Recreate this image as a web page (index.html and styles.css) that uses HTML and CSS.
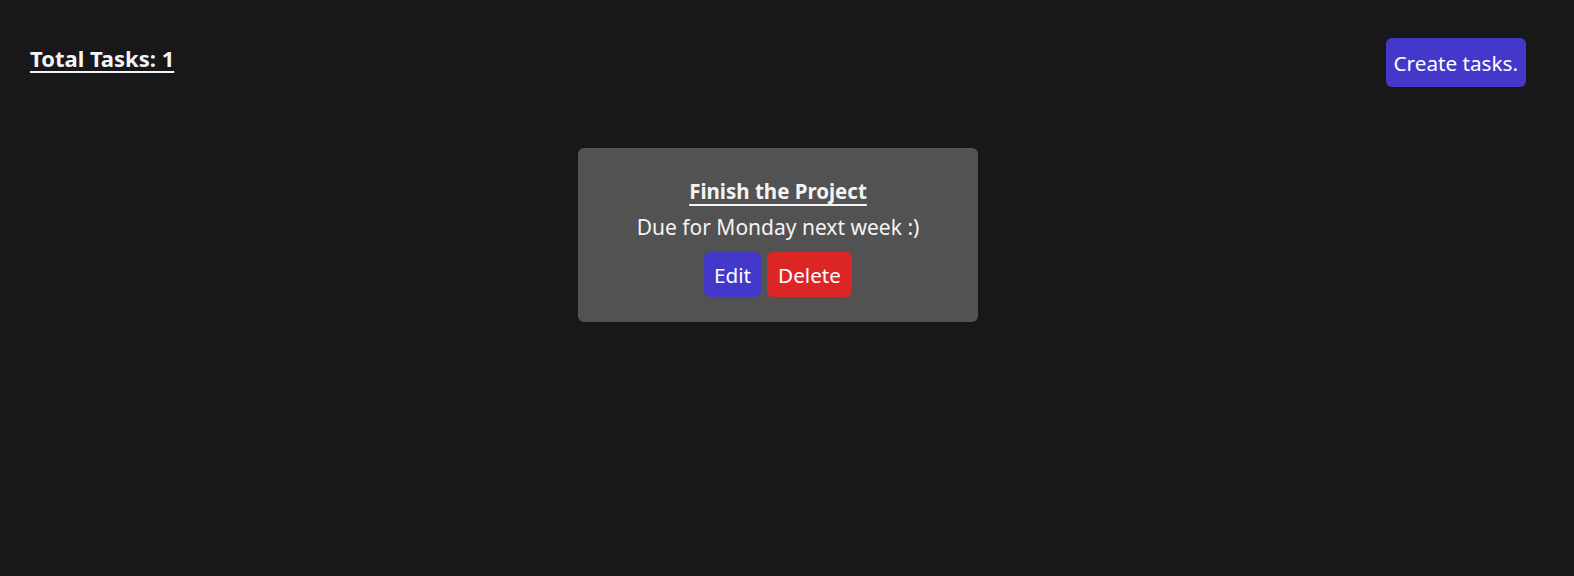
FILE: index.html
```html
<!DOCTYPE html>
<html>
<head>
<meta charset="utf-8">
<link rel="stylesheet" href="styles.css">
</head>
<body>
<div class="page">
  <header class="topbar">
    <h1 class="total">Total Tasks: 1</h1>
    <button class="btn btn-create">Create tasks.</button>
  </header>
  <main class="list">
    <div class="card">
      <h2 class="card-title">Finish the Project</h2>
      <p class="card-desc">Due for Monday next week :)</p>
      <div class="actions">
        <button class="btn btn-edit">Edit</button>
        <button class="btn btn-delete">Delete</button>
      </div>
    </div>
  </main>
</div>
</body>
</html>
```
FILE: styles.css
```css
html, body {
  margin: 0;
  padding: 0;
  background: #18181b;
  color: #f4f4f5;
  font-family: "Noto Sans", "Open Sans", sans-serif;
}
.page {
  min-height: 576px;
}
.topbar {
  display: flex;
  justify-content: space-between;
  align-items: flex-start;
  padding: 38px 48px 0 30px;
}
.total {
  margin: 6px 0 0 0;
  font-size: 22px;
  font-weight: 700;
  line-height: 28px;
  text-decoration: underline;
  text-underline-offset: 4px;
}
.btn {
  border: none;
  color: #fff;
  font-family: inherit;
  font-size: 20.7px;
  border-radius: 6px;
  cursor: pointer;
}
.btn-create {
  background: #4338ca;
  height: 49px;
  padding: 0 8px;
}
.list {
  display: flex;
  justify-content: center;
  padding: 61px 18px 0 0;
}
.card {
  width: 400px;
  height: 174px;
  box-sizing: border-box;
  background: #525252;
  border-radius: 6px;
  display: flex;
  flex-direction: column;
  align-items: center;
  padding-top: 29px;
}
.card-title {
  margin: 0;
  font-size: 20.5px;
  font-weight: 700;
  line-height: 28px;
  text-decoration: underline;
  text-underline-offset: 5px;
}
.card-desc {
  margin: 8px 0 0 0;
  font-size: 21px;
  line-height: 28px;
}
.actions {
  display: flex;
  gap: 6px;
  margin-top: 11px;
}
.btn-edit {
  background: #4338ca;
  height: 45px;
  padding: 0 10px;
}
.btn-delete {
  background: #dc2626;
  height: 45px;
  padding: 0 11px;
}
```
